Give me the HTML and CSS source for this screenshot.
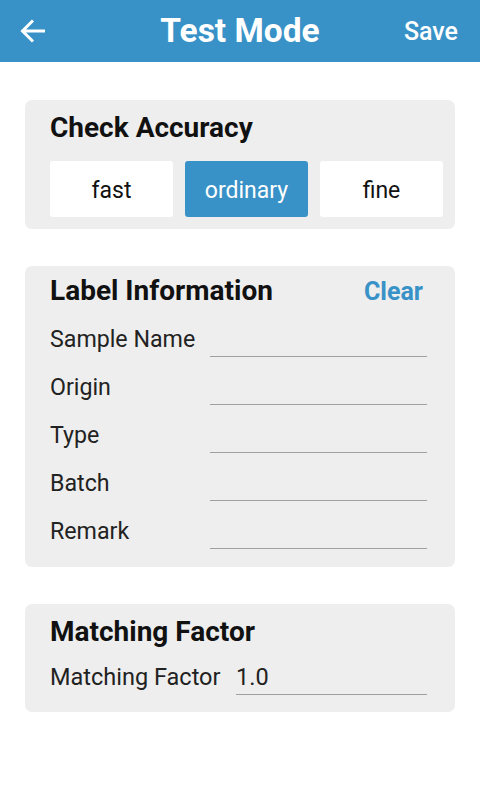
FILE: index.html
```html
<!DOCTYPE html>
<html>
<head>
<meta charset="utf-8">
<link rel="stylesheet" href="styles.css">
</head>
<body>
<header class="topbar">
  <button class="back" aria-label="Back">
    <svg width="28" height="28" viewBox="0 0 28 28"><path d="M26 14H3.5M14 3.5L3.5 14L14 24.5" fill="none" stroke="#fff" stroke-width="3" stroke-linecap="butt" stroke-linejoin="miter"/></svg>
  </button>
  <h1 class="title">Test Mode</h1>
  <span class="save">Save</span>
</header>
<main class="content">
  <section class="card card-accuracy">
    <h2 class="card-title">Check Accuracy</h2>
    <div class="seg">
      <div class="seg-btn">fast</div>
      <div class="seg-btn active">ordinary</div>
      <div class="seg-btn">fine</div>
    </div>
  </section>
  <section class="card card-label">
    <div class="card-head">
      <h2 class="card-title">Label Information</h2>
      <span class="clear">Clear</span>
    </div>
    <div class="row"><span class="lbl">Sample Name</span><div class="field"></div></div>
    <div class="row"><span class="lbl">Origin</span><div class="field"></div></div>
    <div class="row"><span class="lbl">Type</span><div class="field"></div></div>
    <div class="row"><span class="lbl">Batch</span><div class="field"></div></div>
    <div class="row"><span class="lbl">Remark</span><div class="field"></div></div>
  </section>
  <section class="card card-factor">
    <h2 class="card-title">Matching Factor</h2>
    <div class="row row-factor"><span class="lbl lbl-factor">Matching Factor</span><div class="field"><span class="val">1.0</span></div></div>
  </section>
</main>
</body>
</html>
```
FILE: styles.css
```css
* { box-sizing: border-box; }
html, body { margin: 0; padding: 0; background: #fff; }
body { font-family: Roboto, "Noto Sans", sans-serif; color: #1e1e1e; width: 480px; }

.topbar {
  height: 62px;
  background: #3892c7;
  display: grid;
  grid-template-columns: 1fr auto 1fr;
  align-items: center;
  padding: 0 22px;
}
.back {
  justify-self: start;
  background: none; border: 0; padding: 0;
  margin: 0 0 0 -4px;
  width: 30px; height: 30px;
  display: flex; align-items: center; justify-content: center;
}
.title {
  margin: 0;
  text-align: center;
  color: #fff;
  font-size: 33.5px;
  font-weight: 700;
  line-height: 38px;
}
.save {
  justify-self: end;
  color: #fff;
  font-size: 25px;
  font-weight: 500;
  line-height: 28px;
  padding-top: 1px;
}

.content { padding-top: 38px; }

.card {
  background: #eeeeee;
  border-radius: 7px;
  margin: 0 25px 37px;
}
.card-title {
  margin: 0;
  font-size: 28px;
  font-weight: 700;
  line-height: 32px;
  color: #111;
}

.card-accuracy { padding: 12px 12px 12px 25px; }
.seg {
  margin-top: 17px;
  display: flex;
  gap: 12px;
}
.seg-btn {
  flex: 1;
  height: 56px;
  background: #fff;
  border-radius: 3px;
  display: flex; align-items: center; justify-content: center;
  font-size: 23px;
  color: #111;
  padding-top: 2px;
}
.seg-btn.active { background: #3892c7; color: #fff; }

.card-label { padding: 9px 28px 18px 25px; }
.card-head {
  display: flex;
  justify-content: space-between;
  align-items: center;
  margin-bottom: 2px;
}
.clear {
  color: #3892c7;
  font-size: 25px;
  font-weight: 700;
  line-height: 30px;
  padding-right: 4px;
  padding-top: 1px;
}
.row {
  height: 48px;
  display: flex;
  align-items: flex-end;
}
.lbl {
  width: 160px;
  flex: none;
  font-size: 23.2px;
  line-height: 27px;
  padding-bottom: 4px;
  color: #222;
}
.field {
  flex: 1;
  height: 32px;
  border-bottom: 1px solid #a0a0a0;
  display: flex;
  align-items: flex-end;
}
.val {
  font-size: 23.5px;
  line-height: 27px;
  padding-bottom: 3px;
  color: #222;
}

.card-factor { padding: 12px 28px 17px 25px; }
.row-factor { height: 47px; }
.lbl-factor { width: 186px; font-size: 23.5px; }
```
